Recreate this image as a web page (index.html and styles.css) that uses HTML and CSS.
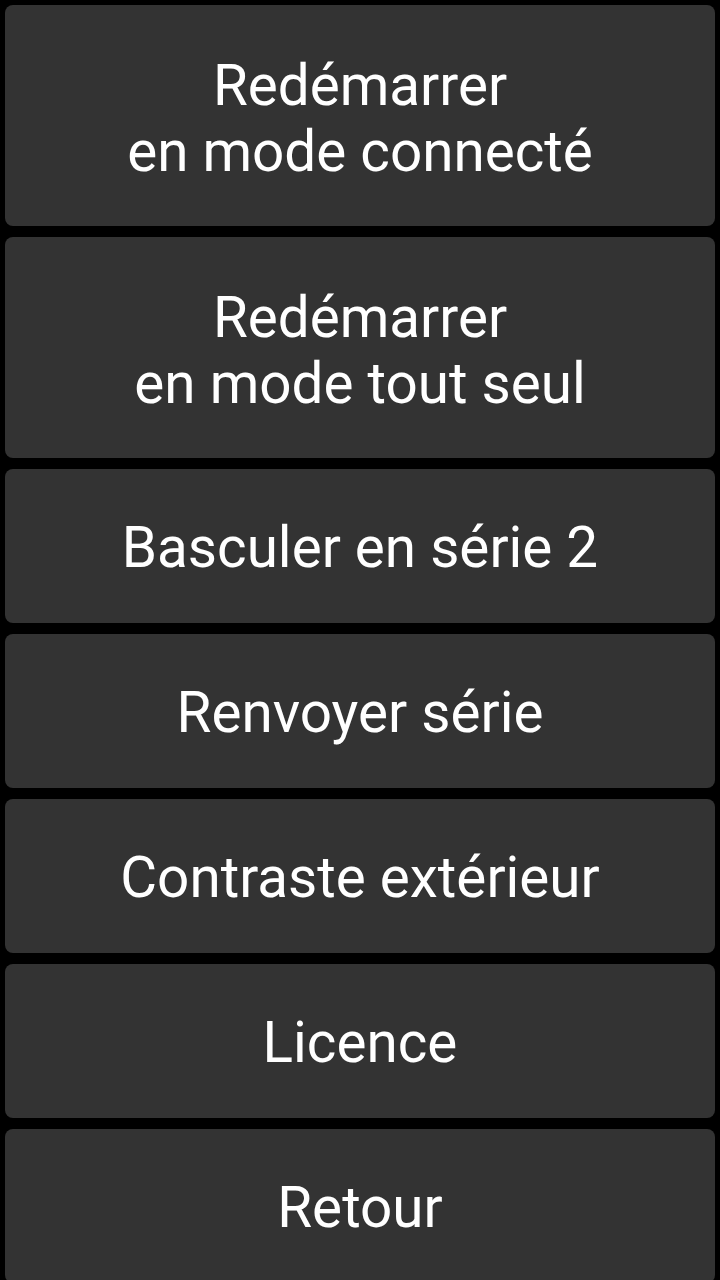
FILE: index.html
```html
<!DOCTYPE html>
<html lang="fr">
<head>
<meta charset="utf-8">
<title>Menu</title>
<link rel="stylesheet" href="styles.css">
</head>
<body>
<main class="menu">
  <button class="item tall">Redémarrer<br>en mode connecté</button>
  <button class="item tall">Redémarrer<br>en mode tout seul</button>
  <button class="item">Basculer en série 2</button>
  <button class="item">Renvoyer série</button>
  <button class="item">Contraste extérieur</button>
  <button class="item">Licence</button>
  <button class="item">Retour</button>
</main>
</body>
</html>
```
FILE: styles.css
```css
html, body {
  margin: 0;
  padding: 0;
  background: #000;
  height: 1280px;
  overflow: hidden;
}
.menu {
  display: flex;
  flex-direction: column;
  gap: 11px;
  padding: 5px 5px 0;
}
.item {
  flex: none;
  height: 154px;
  border: none;
  border-radius: 8px;
  background: #333333;
  color: #ffffff;
  font-family: Roboto, "Noto Sans", sans-serif;
  font-size: 56.6px;
  line-height: 66px;
  text-align: center;
  padding: 4px 0 0;
  margin: 0;
}
.item.tall {
  height: 221px;
  padding-top: 6px;
}
```
